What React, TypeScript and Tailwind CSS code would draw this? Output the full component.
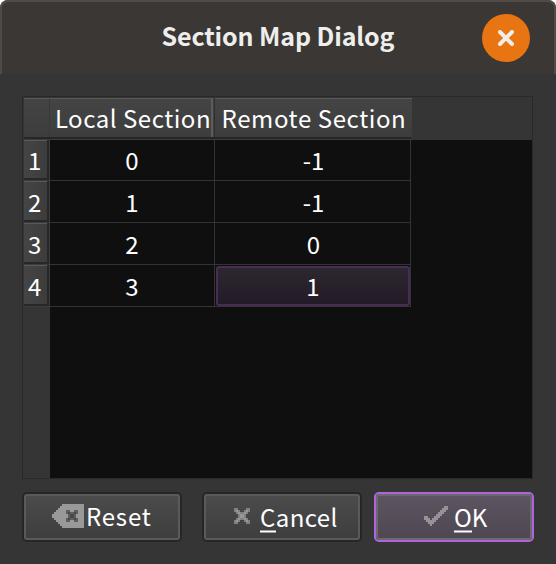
import React from "react";

const rows = [
  { id: "1", local: "0", remote: "-1" },
  { id: "2", local: "1", remote: "-1" },
  { id: "3", local: "2", remote: "0" },
  { id: "4", local: "3", remote: "1", selected: true },
];

function CloseIcon() {
  return (
    <svg width="16" height="16" viewBox="0 0 16 16">
      <path d="M2 2L14 14M14 2L2 14" stroke="#eeeeec" strokeWidth="4" strokeLinecap="round" />
    </svg>
  );
}

function ResetIcon() {
  return (
    <svg width="32" height="24" viewBox="0 0 32 24" shapeRendering="crispEdges">
      <path d="M10 0H32V24H10V22H8V20H6V18H4V16H2V14H0V10H2V8H4V6H6V4H8V2H10Z" fill="#999" />
      <path d="M14 6h4v2h4V6h4v4h-2v4h2v4h-4v-2h-4v2h-4v-4h2v-4h-2z" fill="#606060" />
      <path d="M16 8h2v2h4V8h2v2h-2v4h2v2h-2v-2h-4v2h-2v-2h2v-4h-2z" fill="#474747" />
    </svg>
  );
}

function CancelIcon() {
  return (
    <svg width="16" height="16" viewBox="0 0 8 8" shapeRendering="crispEdges">
      <path d="M0 0h2v1h1v1h2v-1h1v-1h2v2h-1v1h-1v2h1v1h1v2h-2v-1h-1v-1h-2v1h-1v1h-2v-2h1v-1h1v-2h-1v-1h-1z" fill="#818181" />
      <path d="M1 1h1v1h1v1h2v-1h1v-1h1v1h-1v1h-1v2h1v1h1v1h-1v-1h-1v-1h-2v1h-1v1h-1v-1h1v-1h1v-2h-1v-1h-1z" fill="#989898" />
    </svg>
  );
}

function CheckIcon() {
  return (
    <svg width="24" height="20" viewBox="0 0 12 10" shapeRendering="crispEdges">
      <path
        d="M10 0h2v2h-1v1h-1v1h-1v1h-1v1h-1v1h-1v1h-1v1h-1v1h-1v-1h-1v-1h-1v-1h-1v-2h2v1h1v1h1v-1h1v-1h1v-1h1v-1h1v-1h1v-1h1z"
        fill="#959395"
      />
    </svg>
  );
}

const headerCell =
  "flex justify-center border-t border-t-[#595959] bg-linear-to-b from-[#444] to-[#3d3d3d] pt-[4px] whitespace-nowrap";
const buttonBase = "flex h-[50px] items-center rounded-[5px] border-2";
const face = "flex h-full w-full items-center rounded-[3px] border-2 bg-linear-to-b";
const mnemonic = "inline-block h-[31px] border-b-2 border-white";

export default function App() {
  return (
    <div className="h-[564px] w-[556px] overflow-hidden bg-white font-['Noto_Sans_CJK_SC','Noto_Sans',sans-serif] text-white">
      <div className="flex h-full flex-col rounded-t-[8px] bg-[#353535]">
        <header className="flex h-[74px] shrink-0 items-center rounded-t-[8px] border-x-2 border-t-2 border-[#4f4b47] bg-[#3b3734] pr-[24px]">
          <div className="w-[46px]" />
          <h1 className="mb-[7px] flex-1 pl-[26px] text-center text-[25px] leading-[30px] font-bold tracking-[-0.12px] whitespace-nowrap text-[#eeeeec]">
            Section Map Dialog
          </h1>
          <button className="flex size-12 items-center justify-center rounded-full bg-[#e87511]">
            <CloseIcon />
          </button>
        </header>

        <main className="mt-[22px] ml-[22px] flex h-[383px] w-[511px] shrink-0 flex-col border border-[#292929] bg-[#0f0f0f] text-[24px] leading-[30px]">
          <div className="h-[43px] shrink-0 bg-[#353535] pt-px pl-px">
            <div className="flex h-[39px]">
              <div className="w-[26px] border-t border-r border-t-[#595959] border-r-[#393939] bg-linear-to-b from-[#444] to-[#3d3d3d]" />
              <div className={headerCell + " w-[163px] border-r-2 border-r-[#5c5c5c] pl-[5px] tracking-[0.53px]"}>
                Local Section
              </div>
              <div className="w-[2px] border-r border-[#303030] bg-[#404040]" />
              <div className={headerCell + " w-[197px] pl-px tracking-[0.6px]"}>Remote Section</div>
            </div>
            <div className="h-[3px] w-[387px] border-b border-[#3c3c3c] bg-[#262626]" />
          </div>
          <div className="flex flex-1">
            <div className="w-[27px] bg-[#353535] pl-px">
              {rows.map((r) => (
                <div
                  key={r.id}
                  className="h-[42px] border-r border-b border-[#3c3c3c] bg-[#272727] pr-[2px] pb-[2px] first:h-[41px]"
                >
                  <div className="flex h-full items-center border-t border-[#595959] bg-linear-to-r from-[#454545] to-[#3c3c3c] pt-px pl-[4px]">
                    {r.id}
                  </div>
                </div>
              ))}
            </div>
            <div>
              {rows.map((r) => (
                <div key={r.id} className="flex h-[42px] first:h-[41px]">
                  <div className="flex w-[165px] items-center justify-center border-r border-b border-[#333]">
                    {r.local}
                  </div>
                  <div className="flex w-[196px] border-r border-b border-[#333]">
                    <div
                      className={
                        r.selected
                          ? "mt-px ml-px flex flex-1 items-center justify-center rounded-[3px] border-2 border-[#472c56] bg-linear-to-b from-[#2c282d] to-[#241a29]"
                          : "flex flex-1 items-center justify-center pl-[2px]"
                      }
                    >
                      {r.remote}
                    </div>
                  </div>
                </div>
              ))}
            </div>
          </div>
        </main>

        <footer className="mt-[13px] ml-[22px] flex text-[24px] leading-[30px]">
          <button className={buttonBase + " w-[160px] border-[#262626]"}>
            <span className={face + " border-[#5a5a5a] from-[#4b4b4b] to-[#3e3e3e] pl-[26px]"}>
              <span className="-translate-y-px"><ResetIcon /></span>
              <span className="ml-[2px] -translate-y-px tracking-[0.8px] whitespace-nowrap">Reset</span>
            </span>
          </button>
          <button className={buttonBase + " ml-[20px] w-[160px] border-[#262626]"}>
            <span className={face + " border-[#5a5a5a] from-[#4b4b4b] to-[#3e3e3e] pl-[28px]"}>
              <span className="-translate-y-px"><CancelIcon /></span>
              <span className="ml-[10px] -translate-y-[0.5px] tracking-[0.4px] whitespace-nowrap">
                <span className={mnemonic}>C</span>ancel
              </span>
            </span>
          </button>
          <button className={buttonBase + " ml-[12px] w-[160px] border-[#af64de]"}>
            <span className={face + " border-[#6d6770] from-[#5c5460] to-[#4f4853] pl-[46px]"}>
              <span className="-translate-y-px"><CheckIcon /></span>
              <span className="ml-[6px] -translate-y-[0.5px] whitespace-nowrap">
                <span className={mnemonic}>O</span>K
              </span>
            </span>
          </button>
        </footer>
      </div>
    </div>
  );
}
